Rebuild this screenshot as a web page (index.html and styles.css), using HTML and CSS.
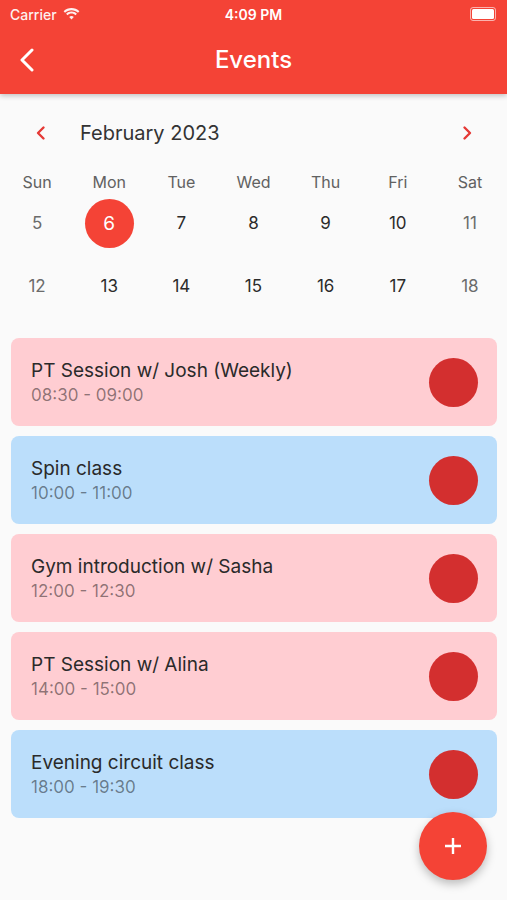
FILE: index.html
```html
<!DOCTYPE html>
<html lang="en">
<head>
<meta charset="UTF-8" />
<meta name="viewport" content="width=device-width, initial-scale=1" />
<title>Events</title>
<link rel="stylesheet" href="styles.css">
</head>
<body>

  <header class="app-bar">
    <div class="status-bar">
      <div class="status-left">
        <span>Carrier</span>
        <svg class="wifi" width="17" height="12" viewBox="0 0 17 12">
          <path d="M8.5 2.2c2.5 0 4.8 1 6.5 2.6l1.4-1.5C14.3 1.3 11.5.1 8.5.1S2.7 1.3.6 3.3L2 4.8c1.7-1.6 4-2.6 6.5-2.6z" fill="#fff"/>
          <path d="M8.5 5.6c1.5 0 2.9.6 4 1.6l1.4-1.5C12.5 4.4 10.6 3.6 8.5 3.6S4.5 4.4 3.1 5.7l1.4 1.5c1.1-1 2.5-1.6 4-1.6z" fill="#fff"/>
          <path d="M8.5 8.1c-.9 0-1.7.4-2.3 1L8.5 11.6l2.3-2.5c-.6-.6-1.4-1-2.3-1z" fill="#fff"/>
        </svg>
      </div>
      <span class="clock">4:09 PM</span>
      <div class="battery"><div class="battery-level"></div></div>
    </div>
    <div class="toolbar">
      <svg class="back" width="16" height="24" viewBox="0 0 16 24">
        <path d="M13 2 L3 12 L13 22" fill="none" stroke="#fff" stroke-width="3" stroke-linecap="round" stroke-linejoin="round"/>
      </svg>
      <h1>Events</h1>
    </div>
  </header>

  <section class="calendar">
    <div class="month-row">
      <svg class="chev" width="12" height="16" viewBox="0 0 12 16">
        <path d="M8.5 2.5 L3 8 L8.5 13.5" fill="none" stroke="#e53935" stroke-width="2.4" stroke-linecap="round" stroke-linejoin="round"/>
      </svg>
      <span class="month">February 2023</span>
      <svg class="chev right" width="12" height="16" viewBox="0 0 12 16">
        <path d="M3.5 2.5 L9 8 L3.5 13.5" fill="none" stroke="#e53935" stroke-width="2.4" stroke-linecap="round" stroke-linejoin="round"/>
      </svg>
    </div>

    <div class="week-grid">
      <span class="dow">Sun</span>
      <span class="dow">Mon</span>
      <span class="dow">Tue</span>
      <span class="dow">Wed</span>
      <span class="dow">Thu</span>
      <span class="dow">Fri</span>
      <span class="dow">Sat</span>

      <span class="day weekend">5</span>
      <span class="day"><span class="selected">6</span></span>
      <span class="day">7</span>
      <span class="day">8</span>
      <span class="day">9</span>
      <span class="day">10</span>
      <span class="day weekend">11</span>

      <span class="day weekend">12</span>
      <span class="day">13</span>
      <span class="day">14</span>
      <span class="day">15</span>
      <span class="day">16</span>
      <span class="day">17</span>
      <span class="day weekend">18</span>
    </div>
  </section>

  <ul class="events">
    <li class="event pink">
      <div class="event-text">
        <div class="event-title">PT Session w/ Josh (Weekly)</div>
        <div class="event-time">08:30 - 09:00</div>
      </div>
      <span class="dot"></span>
    </li>
    <li class="event blue">
      <div class="event-text">
        <div class="event-title">Spin class</div>
        <div class="event-time">10:00 - 11:00</div>
      </div>
      <span class="dot"></span>
    </li>
    <li class="event pink">
      <div class="event-text">
        <div class="event-title">Gym introduction w/ Sasha</div>
        <div class="event-time">12:00 - 12:30</div>
      </div>
      <span class="dot"></span>
    </li>
    <li class="event pink">
      <div class="event-text">
        <div class="event-title">PT Session w/ Alina</div>
        <div class="event-time">14:00 - 15:00</div>
      </div>
      <span class="dot"></span>
    </li>
    <li class="event blue">
      <div class="event-text">
        <div class="event-title">Evening circuit class</div>
        <div class="event-time">18:00 - 19:30</div>
      </div>
      <span class="dot"></span>
    </li>
  </ul>

  <button class="fab" type="button" aria-label="Add event">
    <svg width="20" height="20" viewBox="0 0 20 20">
      <path d="M10 2 V18 M2 10 H18" stroke="#fff" stroke-width="2.4"/>
    </svg>
  </button>

</body>
</html>
```

FILE: styles.css
```css
body {
  margin: 0;
  background: #fafafa;
  font-family: Inter, "Noto Sans", sans-serif;
  color: #212121;
  min-height: 900px;
  position: relative;
}
.app-bar {
  background: #f44336;
  color: #fff;
  height: 94px;
  box-shadow: 0 2px 5px rgba(0,0,0,0.22);
}
.status-bar {
  height: 28px;
  display: flex;
  align-items: center;
  justify-content: space-between;
  padding: 0 10px;
  font-size: 14px;
  font-weight: 500;
  position: relative;
}
.status-left {
  display: flex;
  align-items: center;
  gap: 6px;
  opacity: 0.92;
}
.clock {
  position: absolute;
  left: 0;
  right: 0;
  text-align: center;
  font-weight: 600;
}
.battery {
  width: 22px;
  height: 10px;
  border: 1.5px solid rgba(255,255,255,0.6);
  border-radius: 3px;
  padding: 1px;
  margin-right: 1px;
}
.battery-level {
  width: 100%;
  height: 100%;
  background: #fff;
  border-radius: 1.5px;
}
.toolbar {
  height: 66px;
  display: flex;
  align-items: center;
  justify-content: center;
  position: relative;
}
.back {
  position: absolute;
  left: 19px;
  top: 20px;
}
.toolbar h1 {
  margin: 0 0 3px;
  font-size: 24px;
  font-weight: 500;
}
.calendar {
  padding-top: 23px;
}
.month-row {
  display: flex;
  align-items: center;
  height: 32px;
  padding: 0 34px 0 35px;
}
.month {
  font-size: 20px;
  margin-left: 33px;
  color: #333;
  flex: 1;
}
.week-grid {
  display: grid;
  grid-template-columns: repeat(7, 1fr);
  grid-template-rows: 34px 48px 78px;
  margin-top: 16px;
  padding: 0 1px;
}
.dow {
  display: flex;
  align-items: center;
  justify-content: center;
  font-size: 16px;
  color: #616161;
}
.day {
  display: flex;
  align-items: center;
  justify-content: center;
  font-size: 17px;
  color: #2b2b2b;
}
.day.weekend {
  color: #6b6b6b;
}
.selected {
  width: 49px;
  height: 49px;
  border-radius: 50%;
  background: #f44336;
  color: #fff;
  display: flex;
  align-items: center;
  justify-content: center;
  font-size: 19px;
}
.events {
  list-style: none;
  margin: 13px 10px 0 11px;
  padding: 0;
  display: flex;
  flex-direction: column;
  gap: 10px;
}
.event {
  height: 88px;
  border-radius: 8px;
  display: flex;
  align-items: center;
  padding: 0 19px 0 20px;
  box-sizing: border-box;
}
.event.pink {
  background: #ffcdd2;
}
.event.blue {
  background: #bbdefb;
}
.event-text {
  flex: 1;
}
.event-title {
  font-size: 19px;
  color: #2a2a2a;
  line-height: 24px;
}
.event-time {
  font-size: 17px;
  color: rgba(0,0,0,0.45);
  line-height: 22px;
  margin-top: 1px;
}
.dot {
  width: 49px;
  height: 49px;
  border-radius: 50%;
  background: #d32f2f;
}
.fab {
  position: absolute;
  left: 419px;
  top: 812px;
  width: 68px;
  height: 68px;
  border-radius: 50%;
  border: none;
  background: #f44336;
  box-shadow: 0 4px 10px rgba(0,0,0,0.25);
  display: flex;
  align-items: center;
  justify-content: center;
  padding: 0;
}
```
